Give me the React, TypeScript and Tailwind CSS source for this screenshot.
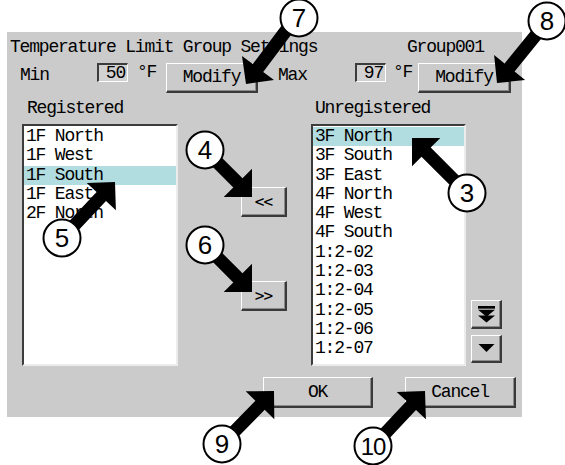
import React from 'react'

type Pt = [number, number]

// callout arrows: tail -> tip, drawn over the dialog
const arrows: { tail: Pt; tip: Pt }[] = [
    { tail: [288, 28], tip: [246, 84] },
    { tail: [540, 30], tip: [497, 83] },
    { tail: [210, 155], tip: [252, 197] },
    { tail: [210, 250], tip: [252, 292] },
    { tail: [67, 233], tip: [115, 182] },
    { tail: [462, 188], tip: [412, 138] },
    { tail: [227, 439], tip: [274, 391] },
    { tail: [378, 441], tip: [425, 391] },
]

const callouts: { n: string; x: number; y: number }[] = [
    { n: '7', x: 299, y: 18 },
    { n: '8', x: 547, y: 21 },
    { n: '4', x: 205, y: 150 },
    { n: '6', x: 205, y: 245 },
    { n: '5', x: 62, y: 238 },
    { n: '3', x: 467, y: 193 },
    { n: '9', x: 222, y: 444 },
    { n: '10', x: 373, y: 446 },
]

function arrowPoints(tail: Pt, tip: Pt) {
    const dx = tip[0] - tail[0]
    const dy = tip[1] - tail[1]
    const len = Math.hypot(dx, dy)
    const d: Pt = [dx / len, dy / len]
    const n: Pt = [-d[1], d[0]]
    const w = 6.5
    const H = 20
    const L = 20
    const B: Pt = [tip[0] - d[0] * L, tip[1] - d[1] * L]
    const pts: Pt[] = [
        [tail[0] + n[0] * w, tail[1] + n[1] * w],
        [B[0] + n[0] * w, B[1] + n[1] * w],
        [B[0] + n[0] * H, B[1] + n[1] * H],
        tip,
        [B[0] - n[0] * H, B[1] - n[1] * H],
        [B[0] - n[0] * w, B[1] - n[1] * w],
        [tail[0] - n[0] * w, tail[1] - n[1] * w],
    ]
    return pts.map((p) => `${p[0].toFixed(1)},${p[1].toFixed(1)}`).join(' ')
}

const btn =
    'flex items-center justify-center bg-[#cbcbcb] border-t border-l border-t-white border-l-white border-r-2 border-b-2 border-r-[#3a3a3a] border-b-[#3a3a3a] shadow-[inset_-1px_-1px_0_#8a8a8a]'

const box =
    'w-[31px] h-[19px] flex items-center justify-end pr-[2px] border-t-2 border-l-2 border-t-[#3c3c3c] border-l-[#3c3c3c] border-r border-b border-r-white border-b-white bg-[#d2d2d2]'

const list =
    'h-[242px] bg-white border-t-2 border-l-2 border-t-[#3c3c3c] border-l-[#3c3c3c] border-r-2 border-b-2 border-r-[#ececec] border-b-[#ececec] pt-[1px] overflow-hidden'

const registered = ['1F North', '1F West', '1F South', '1F East', '2F North']
const unregistered = [
    '3F North',
    '3F South',
    '3F East',
    '4F North',
    '4F West',
    '4F South',
    '1:2-02',
    '1:2-03',
    '1:2-04',
    '1:2-05',
    '1:2-06',
    '1:2-07',
]

function ListBox({ items, selected, width }: { items: string[]; selected: number; width: string }) {
    return (
        <div className={`${list} ${width}`}>
            {items.map((item, i) => (
                <div
                    key={item}
                    className={`h-[19.3px] leading-[19.3px] pl-[2px] whitespace-pre ${i === selected ? 'bg-[#b2dde0]' : ''}`}
                >
                    {item}
                </div>
            ))}
        </div>
    )
}

export default function App() {
    return (
        <div className="relative w-[565px] h-[465px] bg-white overflow-hidden font-['Liberation_Mono',monospace] text-[18px] tracking-[-1.2px] text-black">
            {/* Dialog */}
            <div className="ml-[7px] mt-[32px] w-[515px] h-[385px] bg-[#cbcbcb] flex flex-col">
                {/* Title */}
                <div className="h-[31px] flex items-center pl-[3px] leading-[19px]">
                    <span className="w-[397px]">Temperature Limit Group Settings</span>
                    <span>Group001</span>
                </div>

                {/* Min / Max */}
                <div className="h-[30px] flex items-start pl-[13px] leading-[19px]">
                    <span className="w-[77px] mt-[3px]">Min</span>
                    <div className={box}>50</div>
                    <span className="ml-[9px] w-[29px]">°F</span>
                    <button className={`${btn} w-[92px] h-[30px]`}>Modify</button>
                    <span className="ml-[20px] w-[77px] mt-[3px]">Max</span>
                    <div className={box}>97</div>
                    <span className="ml-[7px] w-[25px]">°F</span>
                    <button className={`${btn} w-[93px] h-[30px]`}>Modify</button>
                </div>

                {/* Labels */}
                <div className="h-[31px] flex items-center pl-[20px] leading-[19px]">
                    <span className="w-[288px]">Registered</span>
                    <span>Unregistered</span>
                </div>

                {/* Lists */}
                <div className="flex pl-[15px]">
                    <ListBox items={registered} selected={2} width="w-[156px]" />
                    <div className="w-[133px] flex flex-col pl-[63px]">
                        <button className={`${btn} mt-[63px] w-[46px] h-[30px] text-[16px] tracking-[-1px] font-['DejaVu_Sans_Mono',monospace] font-light`}>
                            &lt;&lt;
                        </button>
                        <button className={`${btn} mt-[64px] w-[46px] h-[30px] text-[16px] tracking-[-1px] font-['DejaVu_Sans_Mono',monospace] font-light`}>
                            &gt;&gt;
                        </button>
                    </div>
                    <ListBox items={unregistered} selected={0} width="w-[155px]" />
                    <div className="ml-[5px] flex flex-col justify-end gap-[6px] pb-[3px]">
                        <button className={`${btn} w-[31px] h-[29px]`}>
                            <svg width="17" height="17" viewBox="0 0 16 16">
                                <rect x="0" y="0" width="16" height="2.5" fill="#000" />
                                <polygon points="0,3.5 16,3.5 8,10" fill="#000" />
                                <polygon points="0,9 16,9 8,15.5" fill="#000" />
                            </svg>
                        </button>
                        <button className={`${btn} w-[31px] h-[28px]`}>
                            <svg width="17" height="9" viewBox="0 0 16 9">
                                <polygon points="0,0 16,0 8,8" fill="#000" />
                            </svg>
                        </button>
                    </div>
                </div>

                {/* OK / Cancel */}
                <div className="flex pl-[256px] mt-[11px]">
                    <button className={`${btn} w-[110px] h-[31px]`}>OK</button>
                    <button className={`${btn} ml-[32px] w-[111px] h-[31px]`}>Cancel</button>
                </div>
            </div>

            {/* Callouts */}
            <svg className="absolute left-0 top-0 pointer-events-none" width="565" height="465" viewBox="0 0 565 465">
                {arrows.map((a, i) => (
                    <polygon key={i} points={arrowPoints(a.tail, a.tip)} fill="#000" />
                ))}
                {callouts.map((c) => (
                    <g key={c.n}>
                        <circle cx={c.x} cy={c.y} r="18.5" fill="#fff" stroke="#000" strokeWidth="2" />
                        <text
                            x={c.x}
                            y={c.y + 9}
                            textAnchor="middle"
                            fontFamily="Liberation Sans, Arial, sans-serif"
                            fontSize={c.n.length > 1 ? 24 : 26}
                            letterSpacing={c.n.length > 1 ? -1 : 0}
                            fill="#000"
                        >
                            {c.n}
                        </text>
                    </g>
                ))}
            </svg>
        </div>
    )
}
